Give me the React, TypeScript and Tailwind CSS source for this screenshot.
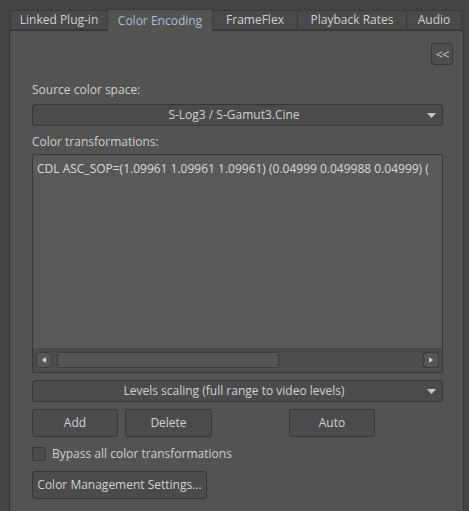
import React, { useState } from 'react';

const tabs = [
  { label: 'Linked Plug-in', w: 'w-[98px]' },
  { label: 'Color Encoding', w: 'w-[106px]' },
  { label: 'FrameFlex', w: 'w-[86px]' },
  { label: 'Playback Rates', w: 'w-[110px]' },
  { label: 'Audio', w: 'w-[56px]' },
];

function Arrow() {
  return (
    <svg width="9" height="5" viewBox="0 0 9 5" className="shrink-0">
      <path d="M0 0 H9 L4.5 5 Z" fill="#c8c8c8" />
    </svg>
  );
}

function Dropdown({ label }: { label: string }) {
  return (
    <div className="flex items-center h-[22px] rounded-[3px] border border-[#353535] bg-[#4b4b4b] pl-2 pr-[6px]">
      <span className="flex-1 text-center text-[#d2d2d2]">{label}</span>
      <Arrow />
    </div>
  );
}

function Btn({ label, className }: { label: string; className?: string }) {
  return (
    <button className={`h-[28px] rounded-[3px] border border-[#353535] bg-[#4b4b4b] text-[#d2d2d2] ${className ?? ''}`}>
      {label}
    </button>
  );
}

export default function App() {
  const [active] = useState(1);
  const [bypass, setBypass] = useState(false);

  return (
    <div
      className="w-[469px] h-[511px] bg-[#444444] pt-[9px] pl-[9px] pr-[5px] text-[12px] leading-none overflow-hidden"
      style={{ fontFamily: '"Open Sans", "Noto Sans", sans-serif' }}
    >
      {/* tabs */}
      <div className="flex items-end h-[21px] pl-[1px]">
        {tabs.map((t, i) => (
          <div
            key={t.label}
            className={
              i === active
                ? `${t.w} h-[22px] -mb-[1px] -ml-[1px] flex items-center justify-center bg-[#535353] border border-b-0 border-[#3a3a3a] rounded-t-[2px] text-[#a9bfd6] z-10`
                : `${t.w} h-[20px] flex items-center justify-center bg-[#4a4a4a] border border-[#3a3a3a] rounded-t-[2px] text-[#d0d0d0] -ml-[1px] first:ml-0`
            }
          >
            {t.label}
          </div>
        ))}
      </div>

      {/* panel */}
      <div className="h-[490px] bg-[#535353] border border-[#353535] rounded-tr-[3px] flex flex-col pl-[22px] pr-[20px]">
        <div className="flex justify-end pt-[12px] -mr-[10px]">
          <button className="w-[22px] h-[22px] rounded-[3px] border border-[#383838] bg-[#4e4e4e] text-[#c8c8c8] text-[13px] tracking-[-1px]">
            &lt;&lt;
          </button>
        </div>

        <div className="mt-[19px] text-[#d0d0d0]">Source color space:</div>
        <div className="mt-[8px]">
          <Dropdown label="S-Log3 / S-Gamut3.Cine" />
        </div>

        <div className="mt-[10px] text-[#d0d0d0]">Color transformations:</div>
        <div className="mt-[6px] h-[219px] border border-[#353535] rounded-[2px] bg-[#595959] flex flex-col overflow-hidden">
          <div className="flex-1 pt-[8px] pl-[4px] whitespace-nowrap text-[#dadada] text-[12px]">
            CDL ASC_SOP=(1.09961 1.09961 1.09961) (0.04999 0.049988 0.04999) (
          </div>
          <div className="h-[24px] bg-[#4c4c4c] flex items-center gap-[5px] px-[3px]">
            <div className="w-[16px] h-[16px] rounded-[3px] border border-[#3a3a3a] bg-[#555555] flex items-center justify-center">
              <svg width="4" height="6" viewBox="0 0 4 6"><path d="M4 0 V6 L0 3 Z" fill="#d0d0d0" /></svg>
            </div>
            <div className="flex-1 flex items-center h-[16px]">
              <div className="w-[222px] h-[16px] rounded-[3px] border border-[#3a3a3a] bg-[#565656]" />
            </div>
            <div className="w-[16px] h-[16px] rounded-[3px] border border-[#3a3a3a] bg-[#555555] flex items-center justify-center">
              <svg width="4" height="6" viewBox="0 0 4 6"><path d="M0 0 V6 L4 3 Z" fill="#d0d0d0" /></svg>
            </div>
          </div>
        </div>

        <div className="mt-[7px]">
          <Dropdown label="Levels scaling (full range to video levels)" />
        </div>

        <div className="mt-[7px] flex">
          <Btn label="Add" className="w-[86px]" />
          <Btn label="Delete" className="w-[87px] ml-[7px]" />
          <Btn label="Auto" className="w-[86px] ml-[77px]" />
        </div>

        <label className="mt-[10px] flex items-center gap-[6px] text-[#d0d0d0] cursor-pointer">
          <span
            onClick={() => setBypass(!bypass)}
            className="w-[14px] h-[14px] rounded-[2px] border border-[#383838] bg-[#4b4b4b]"
          />
          Bypass all color transformations
        </label>

        <div className="mt-[10px]">
          <Btn label="Color Management Settings..." className="w-[175px]" />
        </div>
      </div>
    </div>
  );
}
